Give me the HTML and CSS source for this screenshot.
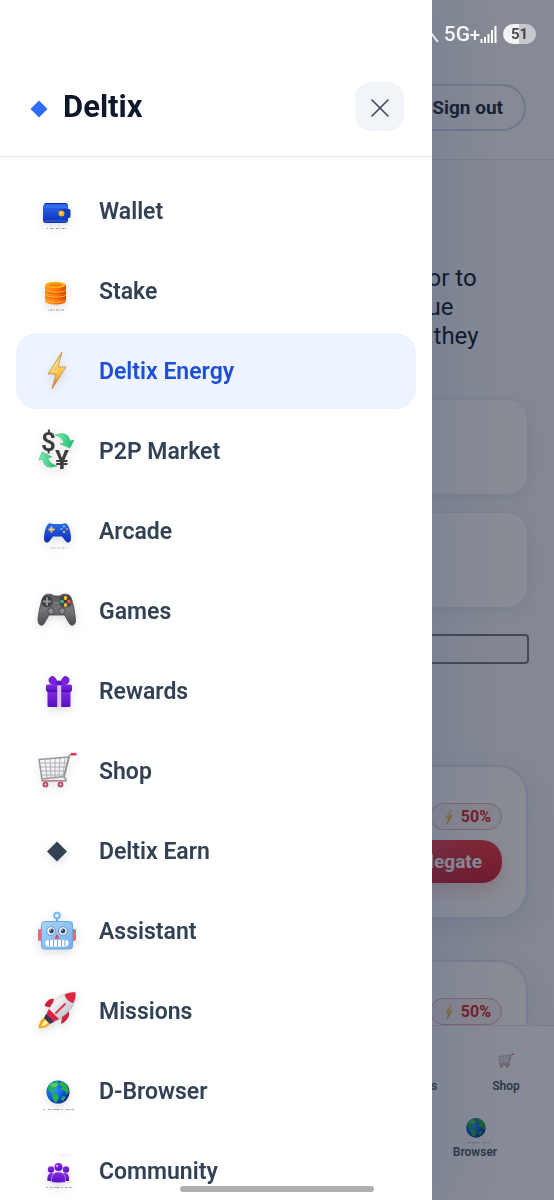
FILE: index.html
```html
<!DOCTYPE html>
<html lang="en">
<head>
<meta charset="utf-8">
<meta name="viewport" content="width=device-width, initial-scale=1">
<title>Deltix</title>
<link rel="stylesheet" href="styles.css">
</head>
<body>
<svg class="defs" aria-hidden="true">
  <defs>
    <linearGradient id="blue" x1="0" y1="0" x2="0" y2="1"><stop offset="0" stop-color="#2b6bf0"/><stop offset="1" stop-color="#0a2eb4"/></linearGradient>
    <linearGradient id="orange" x1="0" y1="0" x2="1" y2="0"><stop offset="0" stop-color="#ff9a1c"/><stop offset=".5" stop-color="#ff7a08"/><stop offset="1" stop-color="#e04a02"/></linearGradient>
    <linearGradient id="gold" x1="0" y1="0" x2="0" y2="1"><stop offset="0" stop-color="#c98230"/><stop offset=".3" stop-color="#fbd870"/><stop offset=".65" stop-color="#f8b840"/><stop offset="1" stop-color="#c2681c"/></linearGradient>
    <linearGradient id="green" x1="0" y1="0" x2="1" y2="0"><stop offset="0" stop-color="#7ff0b4"/><stop offset="1" stop-color="#16b866"/></linearGradient>
    <linearGradient id="grey" x1="0" y1="0" x2="0" y2="1"><stop offset="0" stop-color="#55555a"/><stop offset=".5" stop-color="#77757a"/><stop offset="1" stop-color="#4c4a50"/></linearGradient>
    <linearGradient id="purple" x1="0" y1="0" x2="0" y2="1"><stop offset="0" stop-color="#8a2be8"/><stop offset="1" stop-color="#5410bd"/></linearGradient>
    <linearGradient id="sky" x1="0" y1="0" x2="1" y2="1"><stop offset="0" stop-color="#a8d4fc"/><stop offset="1" stop-color="#72aef0"/></linearGradient>
    <linearGradient id="hull" x1="0" y1="0" x2="1" y2="1"><stop offset=".2" stop-color="#ffffff"/><stop offset="1" stop-color="#a9aab4"/></linearGradient>
    <radialGradient id="sea" cx=".35" cy=".4" r=".7"><stop offset="0" stop-color="#2f9bff"/><stop offset=".6" stop-color="#0a56d8"/><stop offset="1" stop-color="#06257c"/></radialGradient>
    <symbol id="bolt" viewBox="0 0 40 40"><path d="M25 1 11 23h8l-4 15 14-22h-8z" fill="url(#gold)" stroke="#c48a3c" stroke-width=".7" stroke-linejoin="round"/><path d="M23 7 14 21h7" fill="none" stroke="#fff0a8" stroke-width="1" opacity=".7"/></symbol>
    <symbol id="cart" viewBox="0 0 40 40">
      <g fill="none" stroke="#b3b0b6" stroke-width="1"><path d="M3 12h27M4 16h26M4 20h25M5 24h23M8 8l2 19M13 8l1 18M18 7v19M23 7l-1 18M28 6l-2 19"/></g>
      <path d="M32 6 2 8.500 5 28 27 25.500z" fill="none" stroke="#98969c" stroke-width="1.600" stroke-linejoin="round"/>
      <path d="M35 3c-3 0-3 3-4 6l-4 17c1 2 3 2 2 4H5" fill="none" stroke="#98969c" stroke-width="1.600"/>
      <path d="M34 3.200h5.500" stroke="#e2364d" stroke-width="2.600"/><path d="M4 29.500h24" stroke="#d47a87" stroke-width="1"/>
      <g fill="#ddd" stroke="#bd3f51" stroke-width="1.700"><circle cx="8.500" cy="33.500" r="2"/><circle cx="23.500" cy="33.500" r="2"/></g>
    </symbol>
    <symbol id="globe" viewBox="0 0 40 40"><circle cx="21" cy="21" r="11.500" fill="url(#sea)"/><path d="M11 16c2-4 6-6 10-6l1 3-3 2 1 2-4 2-1 3-3-2zM15 22l5 1 2 3-3 6-3-3zM24 10l5 3 3 6-2 5-2-4-4-1 1-4-3-1zM26 25l3 1-3 4-2-2z" fill="#23b14b"/><ellipse cx="17" cy="14" rx="4" ry="2" fill="#fff" opacity=".25"/><path d="M6 38.500h31" stroke="#9a9b9f" stroke-width=".8" stroke-dasharray="2 3 4 1 7 1"/></symbol>
  </defs>
</svg>

<div class="page">
  <header class="topbar">
    <div class="status">
      <svg class="mute" viewBox="0 0 16 20"><path d="M7 3v6l7 9M7 9c0 4-3 5-4 8" fill="none" stroke="#fff" stroke-width="2"/></svg>
      <span class="net">5G<span class="plus">+</span></span>
      <svg class="signal" viewBox="0 0 17 18"><path d="M1.500 18v-4M5 18v-6M8.500 18V9M12 18V5M15.500 18V1" stroke="#fff" stroke-width="2"/></svg>
      <span class="battery">51</span>
    </div>
    <button class="signout" type="button">Sign out</button>
  </header>
  <main class="content">
    <p class="intro"><span>or to</span><span>ue</span><span>&nbsp;they</span></p>
    <section class="panel"></section>
    <section class="panel"></section>
    <input class="field" type="text" aria-label="Amount">
    <section class="card">
      <span class="pill"><svg class="mini"><use href="#bolt"/></svg>50%</span>
      <button class="delegate" type="button">Delegate</button>
    </section>
    <section class="card">
      <span class="pill"><svg class="mini"><use href="#bolt"/></svg>50%</span>
      <button class="delegate" type="button">Delegate</button>
    </section>
  </main>
</div>
<nav class="tabs" aria-label="Tabs">
  <div class="tabrow">
    <a class="tab tab-end" href="#">s</a>
    <a class="tab" href="#"><svg class="tabicon small"><use href="#cart"/></svg>Shop</a>
  </div>
  <div class="tabrow second">
    <a class="tab" href="#"><svg class="tabicon"><use href="#globe"/></svg>Browser</a>
  </div>
</nav>
<div class="scrim"></div>

<aside class="drawer">
  <header class="head">
    <div class="brand"><svg class="gem" viewBox="0 0 18 18"><path d="M9 .5 17.500 9 9 17.500.5 9z" fill="#2f6bff"/></svg>Deltix</div>
    <button class="close" type="button" aria-label="Close"><svg viewBox="0 0 18 18"><path d="M1 1l16 16M17 1 1 17" stroke="#3b4656" stroke-width="1.600" stroke-linecap="round"/></svg></button>
  </header>
  <nav class="menu" aria-label="Main">
    <a class="item" href="#"><svg class="icon" viewBox="0 0 40 40"><path d="M9 12h19q3 0 3 3H7q0-3 2-3z" fill="#0b2c8e"/><rect x="6" y="13" width="25" height="19" rx="3" fill="url(#blue)"/><path d="M7 16h23M7.500 30h22" stroke="#6f9dff" stroke-width=".5"/><path d="M25 18h7q1.500 0 1.500 2v5q0 2-1.500 2h-7q-3-1-3-4.500t3-4.500z" fill="#123bbe"/><circle cx="24.500" cy="22.500" r="3" fill="#f5a81c"/><circle cx="24" cy="22" r="1.300" fill="#ffe27c"/><path d="M10 37.500h19" stroke="#999" stroke-width="1" stroke-dasharray="1 2 2 1"/></svg>Wallet</a>
    <a class="item" href="#"><svg class="icon" viewBox="0 0 40 40"><path d="M8 14v16c0 2 5 3.500 10.500 3.500S29 32 29 30V14z" fill="url(#orange)"/><ellipse cx="18.500" cy="14" rx="10.500" ry="3.200" fill="#ffb21e"/><ellipse cx="18.500" cy="14" rx="7" ry="1.800" fill="#ef8810"/><path d="M8 19c2 3 19 3 21 0M8 24c2 3 19 3 21 0M8 29c2 3 19 3 21 0" fill="none" stroke="#ffc46a" stroke-width=".8"/><path d="M8 20c2 3 19 3 21 0M8 25c2 3 19 3 21 0" fill="none" stroke="#c94800" stroke-width=".6"/><path d="M11 39h16" stroke="#999" stroke-dasharray="1 1 3 1"/></svg>Stake</a>
    <a class="item active" href="#" aria-current="page"><svg class="icon"><use href="#bolt"/></svg>Deltix Energy</a>
    <a class="item" href="#"><svg class="icon" viewBox="0 0 40 40"><path d="M18 4c8-3 14-1 15 6l4-1-4 8-10-4 4-1c-1-4-4-6-9-8z" fill="url(#green)" stroke="#2fae6c" stroke-width=".5"/><path d="M20 35c-8 3-14 0-14-7l-4 1 3-8 10 5-4 1c1 4 4 6 9 8z" fill="url(#green)" stroke="#2fae6c" stroke-width=".5"/><text class="money" x="4" y="20">$</text><text class="money" x="18" y="38">¥</text></svg>P2P Market</a>
    <a class="item" href="#"><svg class="icon" viewBox="0 0 40 40"><path d="M12 12.500c2-1 3 .5 5 .5h7c2 0 3-1.500 5-.5 3 1 5 9 5 15 0 5-4 5-6 2l-3-4h-9l-3 4c-2 3-6 3-6-2 0-6 2-14 5-15z" fill="url(#blue)"/><path d="M14.500 15.500v6M11.500 18.500h6" stroke="#ffc766" stroke-width="1.800"/><circle cx="27" cy="15.500" r="1.100" fill="#69e08a"/><circle cx="30" cy="18" r="1.100" fill="#ff8170"/><circle cx="27" cy="21" r="1.100" fill="#ffd257"/><circle cx="24.500" cy="18" r="1.100" fill="#77bfff"/><path d="M13 37h17" stroke="#b4b4b8" stroke-dasharray="1 1 2 1"/></svg>Arcade</a>
    <a class="item" href="#"><svg class="icon" viewBox="0 0 40 40"><path d="M8 4c3-1.500 7-1 9 1h6c2-2 6-2.500 9-1 3 1 6 17 6.500 25 .2 6-5 7-7 2l-4-7H12l-4 7c-2 5-7 4-7-2C1.500 21 5 5 8 4z" fill="url(#grey)" stroke="#47454a" stroke-width=".8"/><circle cx="10" cy="10.500" r="5.500" fill="#3f3e42"/><path d="M10 6.500v8M6 10.500h8" stroke="#96969a" stroke-width="2"/><circle cx="28.500" cy="10.500" r="6" fill="#3d3c40"/><circle cx="28.500" cy="7" r="1.900" fill="#f5c62e"/><circle cx="32" cy="10.500" r="1.900" fill="#ee5543"/><circle cx="28.500" cy="14" r="1.900" fill="#e9bd2e"/><circle cx="25" cy="10.500" r="1.900" fill="#28b7a4"/><g fill="#8b898e" stroke="#48464b"><circle cx="14" cy="20" r="3.300"/><circle cx="25" cy="20" r="3.300"/></g><path d="M17 12h5" stroke="#8b898e" stroke-width="1"/></svg>Games</a>
    <a class="item" href="#"><svg class="icon" viewBox="0 0 40 40"><g fill="#7a22dd" stroke="#4c0da3" stroke-width=".8"><path d="M21 14c-7 0-9-2-9-5s4-5 6-2l4 6zM23 14c7 0 9-2 9-5s-4-5-6-2l-4 6z"/></g><rect x="10.500" y="18" width="23" height="18" rx="1.500" fill="url(#purple)"/><rect x="9" y="13.500" width="26" height="7" rx="1.500" fill="url(#purple)"/><path d="M10 20.500h24" stroke="#440a92" stroke-width=".8"/><path d="M22.200 14v22" stroke="#dcc5f8" stroke-width="4"/><circle cx="22" cy="12" r="2.500" fill="#5b16bd"/></svg>Rewards</a>
    <a class="item" href="#"><svg class="icon"><use href="#cart"/></svg>Shop</a>
    <a class="item" href="#"><svg class="icon" viewBox="0 0 40 40"><path d="m20 10.500 10 10-10 10-10-10z" fill="#334155"/></svg>Deltix Earn</a>
    <a class="item" href="#"><svg class="icon" viewBox="0 0 40 40"><rect x="1" y="18" width="6" height="12" rx="2" fill="#e56a7b"/><rect x="33" y="18" width="6" height="12" rx="2" fill="#e56a7b"/><path d="M20 6v5" stroke="#74aaec" stroke-width="2"/><circle cx="20" cy="4.500" r="2.900" fill="#d9efff" stroke="#70b4ec" stroke-width="1.700"/><rect x="4.500" y="10.500" width="31" height="27.500" rx="3" fill="url(#sky)" stroke="#6ca6e4"/><g fill="#fff" stroke="#5382bd" stroke-width=".8"><circle cx="14" cy="20" r="4.300"/><circle cx="26" cy="20" r="4.300"/></g><circle cx="14.500" cy="20" r="2.400" fill="#24466f"/><circle cx="26" cy="20" r="2.400" fill="#24466f"/><circle cx="13.500" cy="19" r=".8" fill="#fff"/><circle cx="25" cy="19" r=".8" fill="#fff"/><path d="m20 23 2.500 4.500h-5z" fill="#e8475d"/><rect x="8.500" y="29" width="23" height="6.500" rx="3" fill="#fff"/><path d="M12.500 29v6M16.500 29v6M20.500 29v6M24.500 29v6M28 29v6" stroke="#7096c5" stroke-width=".9"/></svg>Assistant</a>
    <a class="item" href="#"><svg class="icon" viewBox="0 0 40 40"><path d="M9 26c-5 1-7 6-7.500 11.500C7 37 12 36 14 31z" fill="#f6a51f"/><path d="M9 29c-3 1-4 4-5 6.500 3-.5 6-1.500 7-4z" fill="#fff2a0"/><path d="M17 8C12 7 9 11 7.500 15l7 2zM24 33c4-2 9-6 8-12l-6-1z" fill="#cf203d"/><path d="M38 2c1 9-4 17-10 22l-9 6-9-9 5-8C20 6 28 1 38 2z" fill="url(#hull)" stroke="#a5a3ac" stroke-width=".5"/><path d="M38.500 1.500C39 6 38 9 36 12c-4-1-7-4-8.500-8 3-2 7-3 11-2.500z" fill="#df2444"/><path d="m12 18-3 6 7 7 6-3z" fill="#d82442"/><path d="m9 23-2 4 6 6 4-2z" fill="#34365c"/><path d="m28 13-9 9" stroke="#d53b50" stroke-width="2" stroke-linecap="round"/></svg>Missions</a>
    <a class="item" href="#"><svg class="icon"><use href="#globe"/></svg>D-Browser</a>
    <a class="item" href="#"><svg class="icon" viewBox="0 0 40 40"><path d="M22 4h11" stroke="#e5eaff"/><g fill="url(#purple)"><circle cx="14" cy="18.500" r="3.200"/><circle cx="29" cy="18.500" r="3.200"/><path d="M10.500 30c-.5-5 1-8 4-8s5 3 5 8zM23 30c0-5 2-8 5-8s4.500 3 4 8z"/><circle cx="21.500" cy="16" r="4"/><path d="M14.500 31c-.5-6 2-10 7-10s7.500 4 7 10q-7 1.500-14 0z" stroke="#c7a2f5" stroke-width=".7"/></g><circle cx="20" cy="15" r="1.200" fill="#cf98ff"/><path d="M9 36.500h26" stroke="#9a9b9f" stroke-width=".8" stroke-dasharray="2 2 3 1 6 1"/></svg>Community</a>
  </nav>
</aside>
<div class="homebar"></div>
</body>
</html>
```
FILE: styles.css
```css
* { box-sizing: border-box; }
body {
  margin: 0;
  height: 100vh;
  overflow: hidden;
  background: #f6f8fd;
  color: #0f172a;
  font-family: Roboto, "Noto Sans", sans-serif;
}
button, input { font: inherit; }
a { color: inherit; text-decoration: none; }
.defs { position: absolute; width: 0; height: 0; }

.topbar {
  display: flex;
  flex-direction: column;
  align-items: flex-end;
  gap: 36px;
  padding: 20px 28px 28px;
  border-bottom: 1px solid #dfe4f0;
  background: #fbfcff;
}
.status {
  position: relative;
  z-index: 2;
  display: flex;
  align-items: center;
  height: 28px;
  margin-right: -10px;
  color: #fff;
}
.mute { width: 16px; height: 20px; margin-right: 4px; }
.net { font-size: 21px; font-weight: 500; line-height: 24px; }
.plus { font-size: 18px; }
.signal { width: 17px; height: 18px; margin-right: 6px; }
.battery {
  width: 33px;
  border-radius: 10px;
  background: linear-gradient(90deg, #f2f2f3 50%, #c7c8cb 50%);
  color: #45474c;
  font-size: 15px;
  font-weight: 700;
  line-height: 20px;
  text-align: center;
}
.signout {
  height: 47px;
  padding: 0 21px;
  border: 2px solid #d3d8f2;
  border-radius: 24px;
  background: transparent;
  color: #1e293b;
  font-size: 19px;
  font-weight: 700;
}
.content {
  display: flex;
  flex-direction: column;
  padding: 104px 26px 0;
}
.intro {
  margin: 0 0 48px;
  padding-left: 80%;
  font-size: 24px;
  line-height: 29px;
}
.intro span { display: block; white-space: nowrap; }
.panel {
  height: 96px;
  margin-bottom: 17px;
  border: 1px solid #e6eaf3;
  border-radius: 20px;
  background: #fff;
  box-shadow: 0 4px 16px rgba(30, 41, 80, .08);
}
.field {
  height: 30px;
  margin: 9px -1px 101px 0;
  border: 2px solid #747986;
  border-radius: 4px;
  background: #f6f6f8;
}
.card {
  display: flex;
  flex-direction: column;
  align-items: flex-end;
  gap: 10px;
  margin-bottom: 41px;
  padding: 36px 24px 34px;
  border: 2px solid #e0e5f3;
  border-radius: 30px;
  background: #fff;
  box-shadow: 0 10px 30px rgba(30, 41, 80, .1);
}
.pill {
  display: flex;
  align-items: center;
  gap: 4px;
  height: 27px;
  padding: 0 10px;
  border: 1px solid #f1a8b7;
  border-radius: 14px;
  background: #fdf2f5;
  color: #dc2626;
  font-size: 16px;
  font-weight: 700;
}
.mini { width: 16px; height: 18px; }
.delegate {
  height: 43px;
  padding: 0 20px;
  border: 0;
  border-radius: 20px;
  background: linear-gradient(#ef3a46, #d01f34);
  box-shadow: 0 8px 18px rgba(220, 38, 60, .2);
  color: #fff;
  font-size: 19px;
  font-weight: 700;
}
.tabs {
  position: fixed;
  right: 0;
  bottom: 0;
  left: 0;
  height: 175px;
  padding: 26px 16px 0;
  border-top: 1px solid #dfe3ee;
  background: #fcfdff;
  color: #475569;
  font-size: 12px;
  font-weight: 600;
  line-height: 16px;
}
.tabrow { display: flex; justify-content: flex-end; align-items: flex-end; }
.second { padding-right: 31px; margin-top: 16px; }
.tab {
  display: flex;
  flex-direction: column;
  align-items: center;
  gap: 8px;
  width: 64px;
}
.second .tab { gap: 0; }
.tab-end { margin-right: 8px; }
.tabicon { width: 34px; height: 34px; }
.small { width: 16px; height: 18px; }
.scrim { position: fixed; inset: 0; z-index: 1; background: rgba(15, 23, 42, .5); }

.drawer {
  position: fixed;
  inset: 0 auto 0 0;
  z-index: 3;
  width: 78%;
  overflow: hidden;
  background: #fff;
  box-shadow: 10px 0 50px rgba(60, 90, 150, .18);
}
.head {
  display: flex;
  align-items: center;
  justify-content: space-between;
  padding: 82px 28px 25px 30px;
  border-bottom: 1px solid #e2e6ed;
}
.brand {
  display: flex;
  align-items: center;
  gap: 15px;
  font-size: 31px;
  font-weight: 700;
}
.gem { width: 18px; height: 18px; margin-top: 4px; }
.close {
  display: grid;
  place-items: center;
  width: 49px;
  height: 49px;
  padding: 0;
  border: 0;
  border-radius: 16px;
  background: #f1f5f9;
}
.close svg { width: 18px; height: 18px; margin-top: 2px; }
.menu {
  display: flex;
  flex-direction: column;
  gap: 4px;
  padding: 16px;
}
.item {
  display: flex;
  align-items: center;
  gap: 22px;
  height: 76px;
  padding: 0 21px;
  border-radius: 20px;
  color: #334155;
  font-size: 23px;
  font-weight: 600;
}
.active { background: #eef4ff; color: #1d4ed8; }
.icon {
  width: 40px;
  height: 40px;
  overflow: visible;
  filter: drop-shadow(0 3px 4px rgba(15, 23, 42, .14));
}
.money { fill: #3b3b3e; font-family: Roboto, sans-serif; font-size: 26px; font-weight: 600; }
.homebar {
  position: fixed;
  bottom: 8px;
  left: 50%;
  z-index: 4;
  width: 35%;
  height: 6px;
  border-radius: 3px;
  background: #afafaf;
  transform: translateX(-50%);
}
```
